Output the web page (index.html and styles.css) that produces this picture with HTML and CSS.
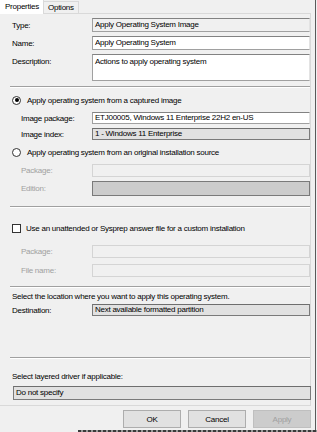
FILE: index.html
```html
<!DOCTYPE html>
<html>
<head>
    <title>Apply Operating System</title>
    <link rel="stylesheet" href="styles.css">
</head>
<body>
<div class="window">
    <div class="tabs">
        <div class="tab selected">Properties</div>
        <div class="tab">Options</div>
    </div>

    <div class="page">
        <div class="row r-type">
            <span class="label">Type:</span>
            <div class="field readonly">Apply Operating System Image</div>
        </div>
        <div class="row r-gap4">
            <span class="label">Name:</span>
            <div class="field white">Apply Operating System</div>
        </div>
        <div class="row r-gap4 r-top">
            <span class="label">Description:</span>
            <div class="field white tall">Actions to apply operating system</div>
        </div>

        <div class="sep s-1"></div>

        <div class="option o-1">
            <span class="radio checked"></span>
            <span>Apply operating system from a captured image</span>
        </div>
        <div class="row sub r-pkg">
            <span class="label">Image package:</span>
            <div class="field white short">ETJ00005, Windows 11 Enterprise 22H2 en-US</div>
        </div>
        <div class="row sub r-gap4">
            <span class="label">Image index:</span>
            <div class="field combo short">1 - Windows 11 Enterprise</div>
        </div>

        <div class="option o-2">
            <span class="radio"></span>
            <span>Apply operating system from an original installation source</span>
        </div>
        <div class="row sub disabled r-dis1">
            <span class="label">Package:</span>
            <div class="field off"></div>
        </div>
        <div class="row sub disabled r-gap4">
            <span class="label">Edition:</span>
            <div class="field dark"></div>
        </div>

        <div class="sep s-2"></div>

        <div class="option o-3">
            <span class="check"></span>
            <span>Use an unattended or Sysprep answer file for a custom installation</span>
        </div>
        <div class="row sub disabled r-dis2">
            <span class="label">Package:</span>
            <div class="field off"></div>
        </div>
        <div class="row sub disabled r-gap6">
            <span class="label">File name:</span>
            <div class="field off"></div>
        </div>

        <div class="sep s-3"></div>

        <p class="note n-1">Select the location where you want to apply this operating system.</p>
        <div class="row r-dest">
            <span class="label">Destination:</span>
            <div class="field combo short">Next available formatted partition</div>
        </div>

        <div class="sep s-4"></div>

        <p class="note n-2">Select layered driver if applicable:</p>
        <div class="field combo full">Do not specify</div>
    </div>

    <div class="buttons">
        <button>OK</button>
        <button>Cancel</button>
        <button class="off-btn">Apply</button>
    </div>
</div>
<div class="under"></div>
</body>
</html>
```

FILE: styles.css
```css
body {
    margin: 0;
    background-color: #f0f0f0;
    font-family: 'Liberation Sans', Arial, sans-serif;
    font-size: 8px;
    letter-spacing: -0.25px;
    color: #000;
    width: 317px;
    height: 432px;
    overflow: hidden;
}
.window {
    width: 315px;
    height: 430px;
    border-right: 1px solid #5a5a5a;
    background-color: #f0f0f0;
}
.tabs {
    display: flex;
    height: 14px;
    align-items: flex-end;
}
.tab {
    height: 12px;
    line-height: 12px;
    padding: 0 4px;
    border: 1px solid #d9d9d9;
    border-bottom: none;
    margin-left: -1px;
}
.tab.selected {
    height: 14px;
    line-height: 14px;
    background-color: #fff;
    margin-left: 0;
    padding: 0 4px 0 5px;
    border-left: none;
}
.page {
    width: 310px;
    height: 391px;
    border: 1px solid #d9d9d9;
    border-left: none;
    box-sizing: content-box;
    padding-top: 0;
    margin-top: -1px;
}
.row {
    display: flex;
    align-items: center;
    padding-left: 12px;
}
.row.r-top {
    align-items: flex-start;
}
.row.r-top .label {
    margin-top: 3px;
}
.row.sub {
    padding-left: 21px;
}
.label {
    flex: none;
    width: 80px;
    white-space: nowrap;
}
.row.sub .label {
    width: 71px;
}
.disabled .label {
    color: #a0a0a0;
}
.field {
    width: 217px;
    height: 12px;
    line-height: 12px;
    padding-left: 2px;
    border: 1px solid #828282;
    border-left-color: #a0a0a0;
    border-right-color: #e3e3e3;
    border-bottom-color: #a0a0a0;
    white-space: nowrap;
    overflow: hidden;
}
.field.white {
    background-color: #fff;
}
.field.readonly {
    background-color: #f0f0f0;
}
.field.tall {
    height: 25px;
    line-height: 14px;
}
.field.short {
    height: 10px;
    line-height: 10px;
}
.field.combo {
    background-color: #e1e1e1;
    border: 1px solid #7a7a7a;
    border-top-color: #6e6e6e;
}
.field.off {
    height: 11px;
    background-color: #f0f0f0;
    border: 1px solid #d4d4d4;
}
.field.dark {
    height: 13px;
    background-color: #cccccc;
    border: 1px solid #7a7a7a;
}
.field.full {
    width: 294px;
    height: 12px;
    line-height: 12px;
    margin-left: 13px;
    margin-top: 3px;
}
.sep {
    margin-left: 10px;
    height: 0;
    border-top: 1px solid #a0a0a0;
    border-bottom: 1px solid #fff;
}
.option {
    display: flex;
    align-items: center;
    height: 12px;
    padding-left: 12px;
}
.radio {
    width: 7px;
    height: 7px;
    border: 1px solid #333;
    border-radius: 50%;
    background-color: #fff;
    margin-right: 6px;
    display: flex;
    align-items: center;
    justify-content: center;
}
.radio.checked::after {
    content: "";
    width: 4px;
    height: 4px;
    border-radius: 50%;
    background-color: #000;
}
.check {
    width: 7px;
    height: 7px;
    border: 1px solid #333;
    background-color: #fff;
    margin-right: 5px;
}
.note {
    margin: 0;
    padding-left: 12px;
    height: 12px;
    line-height: 12px;
}
.r-type { margin-top: 4px; }
.r-gap4 { margin-top: 4px; }
.r-gap6 { margin-top: 6px; }
.s-1 { margin-top: 5px; }
.o-1 { margin-top: 6px; }
.r-pkg { margin-top: 6px; }
.o-2 { margin-top: 6px; }
.r-dis1 { margin-top: 6px; }
.s-2 { margin-top: 10px; }
.o-3 { margin-top: 14px; }
.r-dis2 { margin-top: 11px; }
.s-3 { margin-top: 9px; }
.n-1 { margin-top: 3px; }
.r-dest { margin-top: 1px; }
.s-4 { margin-top: 41px; }
.n-2 { margin-top: 12px; }
.buttons {
    display: flex;
    justify-content: flex-end;
    gap: 7px;
    padding-right: 4px;
    margin-top: 4px;
}
button {
    width: 58px;
    height: 18px;
    font-family: 'Liberation Sans', Arial, sans-serif;
    font-size: 8px;
    letter-spacing: -0.25px;
    background-color: #e1e1e1;
    border: 1px solid #adadad;
    padding: 0;
    color: #000;
}
button.off-btn {
    background-color: #cccccc;
    border-color: #bfbfbf;
    color: #a0a0a0;
}
.under {
    height: 2px;
    margin-left: 78px;
    background: repeating-linear-gradient(90deg, #3a3a3a 0 3px, #9a9a9a 3px 5px);
}
```
